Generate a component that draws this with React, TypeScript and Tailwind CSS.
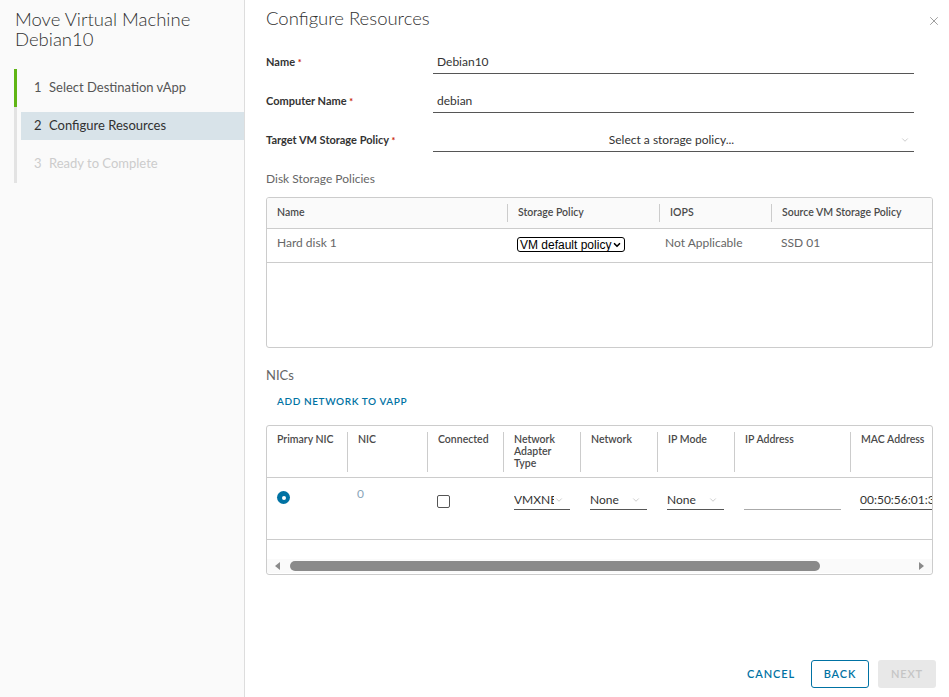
import { ChevronDown, X } from 'lucide-react'

type StepState = 'done' | 'current' | 'todo'

const steps: { n: number; label: string; state: StepState }[] = [
  { n: 1, label: 'Select Destination vApp', state: 'done' },
  { n: 2, label: 'Configure Resources', state: 'current' },
  { n: 3, label: 'Ready to Complete', state: 'todo' },
]

function Step({ n, label, state }: { n: number; label: string; state: StepState }) {
  const bar = state === 'done' ? 'bg-[#60b515]' : 'bg-[#e3e3e3]'
  const box = state === 'current' ? 'bg-[#d8e3e9] text-[#313131]' : ''
  const text = state === 'todo' ? 'text-[#cccccc]' : state === 'done' ? 'text-[#565656]' : ''
  return (
    <div className="flex h-[38px] items-stretch">
      <div className={`w-[3px] ${bar}`} />
      <div className="ml-[4px] flex flex-1 items-center">
        <div className={`flex h-[28px] flex-1 items-center pl-[13px] text-[13px] ${box} ${text}`}>
          <span className="w-[15px]">{n}</span>
          <span>{label}</span>
        </div>
      </div>
    </div>
  )
}

function FormRow({ label, children }: { label: string; children: React.ReactNode }) {
  return (
    <div className="flex h-[24px] items-center">
      <div className="w-[167px] text-[11px] font-bold text-[#333333]">
        {label} <span className="text-[9px] text-[#c92100]">*</span>
      </div>
      <div className="flex h-full w-[481px] items-center border-b border-[#565656]">{children}</div>
    </div>
  )
}

function HeadCell({ children, first }: { children: React.ReactNode; first?: boolean }) {
  return (
    <div className="flex items-stretch py-[6px]">
      <div className={`flex flex-1 items-center pl-[10px] ${first ? '' : 'border-l border-[#cccccc]'}`}>
        {children}
      </div>
    </div>
  )
}

function NicHead({ children, first }: { children: React.ReactNode; first?: boolean }) {
  return (
    <div className="flex items-stretch pt-[6px] pb-[5px]">
      <div
        className={`flex-1 pt-[1px] pr-[6px] pl-[10px] text-[10.5px] leading-[12px] font-semibold text-[#4a4a4a] ${first ? '' : 'border-l border-[#cccccc]'}`}
      >
        {children}
      </div>
    </div>
  )
}

function LineSelect({ value, width }: { value: string; width: string }) {
  return (
    <div className={`flex h-[20px] items-center justify-between overflow-hidden border-b border-[#565656] ${width}`}>
      <span className="overflow-hidden text-[12px] whitespace-nowrap text-[#333333]">{value}</span>
      <ChevronDown size={10} strokeWidth={1.2} className="mr-[6px] shrink-0 text-[#9a9a9a]" />
    </div>
  )
}

export default function App() {
  return (
    <div className="flex h-screen w-full overflow-hidden bg-white font-['Lato','Noto_Sans',sans-serif] text-[#565656]">
      <aside className="flex w-[245px] shrink-0 flex-col border-r border-[#dddddd] bg-[#fafafa]">
        <h2 className="px-[15px] pt-[9px] text-[18.5px] leading-[20px] font-light text-[#313131]">
          Move Virtual Machine
          <br />
          Debian10
        </h2>
        <div className="mt-[20px] ml-[14px] flex flex-col">
          {steps.map((s) => (
            <Step key={s.n} {...s} />
          ))}
        </div>
      </aside>

      <main className="relative flex min-w-0 flex-1 flex-col pt-[6px] pl-[21px]">
        <button className="absolute top-[14px] right-[8px] text-[#8a8a8a]">
          <X size={14} strokeWidth={1.4} />
        </button>

        <h1 className="text-[18.5px] leading-[24px] font-light text-[#313131]">Configure Resources</h1>

        <div className="mt-[20px] flex flex-col gap-[15px]">
          <FormRow label="Name">
            <span className="pl-[4px] text-[12px] text-[#333333]">Debian10</span>
          </FormRow>
          <FormRow label="Computer Name">
            <span className="pl-[4px] text-[12px] text-[#333333]">debian</span>
          </FormRow>
          <FormRow label="Target VM Storage Policy">
            <span className="flex-1 pl-[10px] text-center text-[12px] text-[#333333]">Select a storage policy...</span>
            <ChevronDown size={10} strokeWidth={1.2} className="mr-[4px] text-[#9a9a9a]" />
          </FormRow>
        </div>

        <div className="mt-[19px] text-[12px] leading-[16px] text-[#666666]">Disk Storage Policies</div>

        <div className="mt-[10px] mr-[16px] flex h-[151px] flex-col overflow-hidden rounded-[3px] border border-[#cccccc]">
          <div className="grid h-[31px] grid-cols-[240px_152px_112px_1fr] border-b border-[#cccccc] bg-[#fafafa] text-[10.5px] font-semibold text-[#4a4a4a]">
            <HeadCell first>Name</HeadCell>
            <HeadCell>Storage Policy</HeadCell>
            <HeadCell>IOPS</HeadCell>
            <HeadCell>Source VM Storage Policy</HeadCell>
          </div>
          <div className="grid h-[34px] grid-cols-[240px_152px_112px_1fr] border-b border-[#cccccc] text-[12px] text-[#666666]">
            <div className="pt-[5px] pl-[10px]">Hard disk 1</div>
            <div className="pt-[8px] pl-[10px]">
              <div className="flex h-[15px] w-[108px] items-center justify-between rounded-[3px] border-[1.5px] border-black pr-[2px] pl-[2px] font-['Liberation_Sans',sans-serif] text-[12px] leading-[12px] text-black">
                <span>VM default policy</span>
                <ChevronDown size={10} strokeWidth={4} />
              </div>
            </div>
            <div className="pt-[5px] pl-[6px]">Not Applicable</div>
            <div className="pt-[5px] pl-[10px]">SSD 01</div>
          </div>
        </div>

        <div className="mt-[19px] text-[13px] leading-[16px] text-[#666666]">NICs</div>
        <button className="mt-[12px] self-start pl-[11px] text-[10px] leading-[12px] font-semibold tracking-[0.06em] text-[#0072a3]">
          ADD NETWORK TO VAPP
        </button>

        <div className="mt-[18px] mr-[16px] flex h-[150px] flex-col overflow-hidden rounded-[3px] border border-[#cccccc]">
          <div className="grid h-[52px] shrink-0 grid-cols-[80px_80px_76px_77px_77px_77px_116px_110px] border-b border-[#cccccc]">
            <NicHead first>Primary NIC</NicHead>
            <NicHead>NIC</NicHead>
            <NicHead>Connected</NicHead>
            <NicHead>
              Network
              <br />
              Adapter
              <br />
              Type
            </NicHead>
            <NicHead>Network</NicHead>
            <NicHead>IP Mode</NicHead>
            <NicHead>IP Address</NicHead>
            <NicHead>MAC Address</NicHead>
          </div>
          <div className="grid h-[62px] shrink-0 grid-cols-[80px_80px_76px_77px_77px_77px_116px_110px] border-b border-[#cccccc]">
            <div className="pt-[13px] pl-[10px]">
              <div className="flex h-[13px] w-[13px] items-center justify-center rounded-full bg-[#0072a3]">
                <div className="h-[4px] w-[4px] rounded-full bg-white" />
              </div>
            </div>
            <div className="pt-[7px] pl-[10px] text-[12px] text-[#8aa5b9]">0</div>
            <div className="pt-[17px] pl-[10px]">
              <div className="h-[13px] w-[13px] rounded-[2px] border border-[#555555]" />
            </div>
            <div className="pt-[12px] pl-[11px]">
              <LineSelect value="VMXNET3" width="w-[56px]" />
            </div>
            <div className="pt-[12px] pl-[10px]">
              <LineSelect value="None" width="w-[57px]" />
            </div>
            <div className="pt-[12px] pl-[10px]">
              <LineSelect value="None" width="w-[57px]" />
            </div>
            <div className="pt-[12px] pl-[10px]">
              <div className="h-[20px] w-[97px] border-b border-[#aaaaaa]" />
            </div>
            <div className="pt-[12px] pl-[10px]">
              <div className="h-[20px] w-[100px] border-b border-[#565656] text-[12px] leading-[20px] whitespace-nowrap text-[#333333]">
                00:50:56:01:3f:0a
              </div>
            </div>
          </div>
          <div className="flex-1" />
          <div className="mb-[1px] flex h-[14px] items-center bg-[#fafafa] px-[8px]">
            <svg width="5" height="8" viewBox="0 0 5 8" className="shrink-0">
              <path d="M5 0 L0 4 L5 8 Z" fill="#8a8a8a" />
            </svg>
            <div className="ml-[10px] h-[10px] w-[530px] rounded-full bg-[#8a8a8a]" />
            <div className="flex-1" />
            <svg width="5" height="8" viewBox="0 0 5 8" className="shrink-0">
              <path d="M0 0 L5 4 L0 8 Z" fill="#8a8a8a" />
            </svg>
          </div>
        </div>

        <div className="mt-auto flex items-center justify-end gap-[9px] pr-[13px] pb-[9px] text-[11px] font-semibold tracking-[0.08em]">
          <button className="h-[28px] px-[7px] text-[#0072a3]">CANCEL</button>
          <button className="h-[28px] w-[58px] rounded-[3px] border border-[#0072a3] text-[#0072a3]">BACK</button>
          <button className="h-[28px] w-[58px] rounded-[3px] bg-[#e8e8e8] text-[#c5c5c5]">NEXT</button>
        </div>
      </main>
    </div>
  )
}
